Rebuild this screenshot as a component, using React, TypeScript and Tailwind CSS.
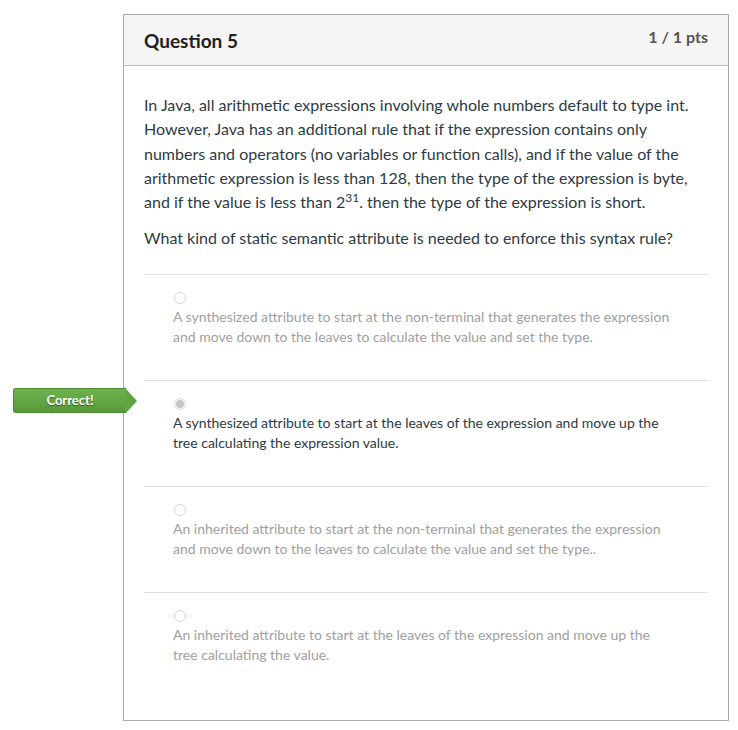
import React from "react";

type Answer = {
  text: string;
  correct?: boolean;
};

const answers: Answer[] = [
  {
    text: "A synthesized attribute to start at the non-terminal that generates the expression and move down to the leaves to calculate the value and set the type.",
  },
  {
    text: "A synthesized attribute to start at the leaves of the expression and move up the tree calculating the expression value.",
    correct: true,
  },
  {
    text: "An inherited attribute to start at the non-terminal that generates the expression and move down to the leaves to calculate the value and set the type..",
  },
  {
    text: "An inherited attribute to start at the leaves of the expression and move up the tree calculating the value.",
  },
];

const AnswerRow = ({ text, correct }: Answer) => {
  return (
    <div className="relative h-[106px] border-t border-[#e2e2e2] pl-[29px] pt-[17px] pr-[30px]">
      {correct && (
        <div className="absolute left-[-131px] top-[7px] flex items-center">
          <div className="h-[25px] w-[113px] rounded-l-[3px] border border-[#4a8a30] border-r-0 bg-gradient-to-b from-[#6fb34f] to-[#57993a] text-center text-[13px] font-bold leading-[23px] text-white [text-shadow:0_1px_1px_rgba(0,0,0,0.45)]">
            Correct!
          </div>
          <div className="h-0 w-0 border-y-[12.5px] border-l-[11px] border-y-transparent border-l-[#60a443]" />
        </div>
      )}
      <div className="ml-[1px] flex h-[12px] w-[12px] items-center justify-center rounded-full border border-[#d6d6d6] bg-white">
        {correct && (
          <div className="h-[8px] w-[8px] rounded-full bg-[#c4c4c4]" />
        )}
      </div>
      <div
        className={`mt-[3px] text-[14px] leading-[20px] ${
          correct ? "text-[#2d3b45]" : "text-[#a0a0a0]"
        }`}
      >
        {text}
      </div>
    </div>
  );
};

export default function App() {
  return (
    <div className="min-h-[730px] w-[738px] bg-white pl-[123px] pt-[14px] font-['Lato','Liberation_Sans',sans-serif] text-[#2d3b45]">
      <div className="w-[606px] border border-[#aaaaaa]">
        {/* header */}
        <div className="flex h-[51px] items-start justify-between border-b border-[#bbbbbb] bg-[#f5f5f5] px-[20px]">
          <div className="pt-[13px] text-[19px] font-bold leading-[26px] text-[#222]">
            Question 5
          </div>
          <div className="pt-[11px] text-[16px] font-bold leading-[22px] text-[#555]">
            1 / 1 pts
          </div>
        </div>

        {/* body */}
        <div className="px-[20px] pb-[22px] pt-[27px]">
          <p className="text-[16px] leading-[24.3px]">
            In Java, all arithmetic expressions involving whole numbers default
            to type int. However, Java has an additional rule that if the
            expression contains only numbers and operators (no variables or
            function calls), and if the value of the arithmetic expression is
            less than 128, then the type of the expression is byte, and if the
            value is less than 2
            <span className="relative top-[-6px] text-[12px] leading-none">31</span>
            . then the type of the expression is short.
          </p>
          <p className="mt-[12px] text-[16px] leading-[24px]">
            What kind of static semantic attribute is needed to enforce this
            syntax rule?
          </p>

          <div className="mt-[24px]">
            {answers.map((a, i) => (
              <AnswerRow key={i} text={a.text} correct={a.correct} />
            ))}
          </div>
        </div>
      </div>
    </div>
  );
}
